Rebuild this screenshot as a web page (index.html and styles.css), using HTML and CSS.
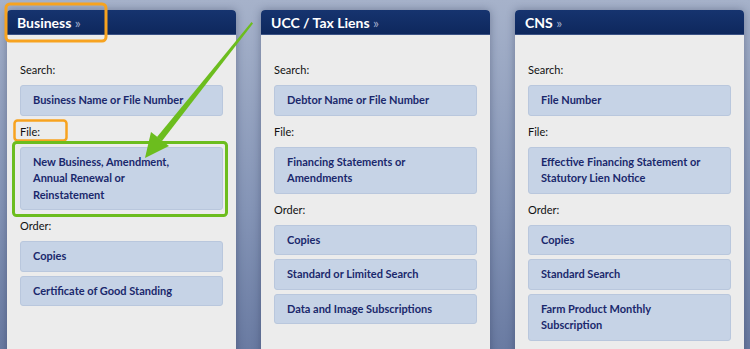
FILE: index.html
```html
<!DOCTYPE html>
<html lang="en">
<head>
  <meta charset="UTF-8" />
  <meta name="viewport" content="width=device-width, initial-scale=1.0"/>
  <title>Online Services</title>
  <link rel="stylesheet" href="styles.css">
</head>
<body>

  <main class="services">

    <section class="panel">
      <h2 class="panel-title">Business <span class="more">&raquo;</span></h2>
      <div class="panel-body">
        <p class="label">Search:</p>
        <a href="#" class="service-btn">Business Name or File Number</a>
        <p class="label">File:</p>
        <a href="#" class="service-btn">New Business, Amendment,<br>Annual Renewal or<br>Reinstatement</a>
        <p class="label">Order:</p>
        <a href="#" class="service-btn">Copies</a>
        <a href="#" class="service-btn">Certificate of Good Standing</a>
      </div>
    </section>

    <section class="panel">
      <h2 class="panel-title">UCC / Tax Liens <span class="more">&raquo;</span></h2>
      <div class="panel-body">
        <p class="label">Search:</p>
        <a href="#" class="service-btn">Debtor Name or File Number</a>
        <p class="label">File:</p>
        <a href="#" class="service-btn">Financing Statements or<br>Amendments</a>
        <p class="label">Order:</p>
        <a href="#" class="service-btn">Copies</a>
        <a href="#" class="service-btn">Standard or Limited Search</a>
        <a href="#" class="service-btn">Data and Image Subscriptions</a>
      </div>
    </section>

    <section class="panel">
      <h2 class="panel-title">CNS <span class="more">&raquo;</span></h2>
      <div class="panel-body">
        <p class="label">Search:</p>
        <a href="#" class="service-btn">File Number</a>
        <p class="label">File:</p>
        <a href="#" class="service-btn">Effective Financing Statement or<br>Statutory Lien Notice</a>
        <p class="label">Order:</p>
        <a href="#" class="service-btn">Copies</a>
        <a href="#" class="service-btn">Standard Search</a>
        <a href="#" class="service-btn">Farm Product Monthly<br>Subscription</a>
      </div>
    </section>

    <!-- callouts drawn over the screenshot -->
    <svg class="callouts" width="750" height="349" viewBox="0 0 750 349">
      <rect x="6" y="4" width="100" height="37" rx="4" fill="none" stroke="#f7a320" stroke-width="3"/>
      <rect x="14.5" y="120.5" width="52" height="20" rx="3" fill="none" stroke="#f7a320" stroke-width="2.5"/>
      <rect x="13.5" y="142.5" width="213" height="73" rx="3" fill="none" stroke="#6cbd1e" stroke-width="3"/>
      <polygon points="251.5,22 253,23.5 162,141 157,137" fill="#6cbd1e"/>
      <polygon points="145,158 151,132 169,146" fill="#6cbd1e"/>
    </svg>

  </main>

</body>
</html>
```

FILE: styles.css
```css
body {
  margin: 0;
  height: 349px;
  overflow: hidden;
  font-family: Lato, "Open Sans", sans-serif;
  background: linear-gradient(#a6b2ca, #8494b6 60%, #6a7ba2);
}

.services {
  position: relative;
  display: flex;
  gap: 25px;
  padding: 10px 0 0 7px;
}

.panel {
  width: 229px;
  min-height: 380px;
  background: #ececec;
  border-radius: 4px 4px 0 0;
  box-shadow: 0 0 8px rgba(20, 30, 60, 0.35);
}

.panel-title {
  margin: 0;
  height: 25px;
  padding-left: 10px;
  line-height: 25px;
  font-size: 14px;
  font-weight: 700;
  color: #fff;
  background: linear-gradient(#16346f, #0e285d);
  border-radius: 4px 4px 0 0;
  border-bottom: 1px solid #3b5285;
  box-sizing: border-box;
}

.panel-title .more {
  font-size: 14px;
  font-weight: 400;
  color: #9ea9c9;
}

.panel-body {
  padding: 19px 13px 0 13px;
}

.label {
  margin: 8px 0 7px;
  line-height: 16px;
  font-size: 11px;
  color: #111;
}

.service-btn {
  display: block;
  margin-bottom: 4px;
  padding: 6px 12px;
  line-height: 16.5px;
  font-size: 11px;
  font-weight: 700;
  color: #1a286c;
  text-decoration: none;
  background: #c6d3e6;
  border: 1px solid #b9c7dd;
  border-radius: 3px;
}

.callouts {
  position: absolute;
  top: 0;
  left: 0;
  pointer-events: none;
}
```
